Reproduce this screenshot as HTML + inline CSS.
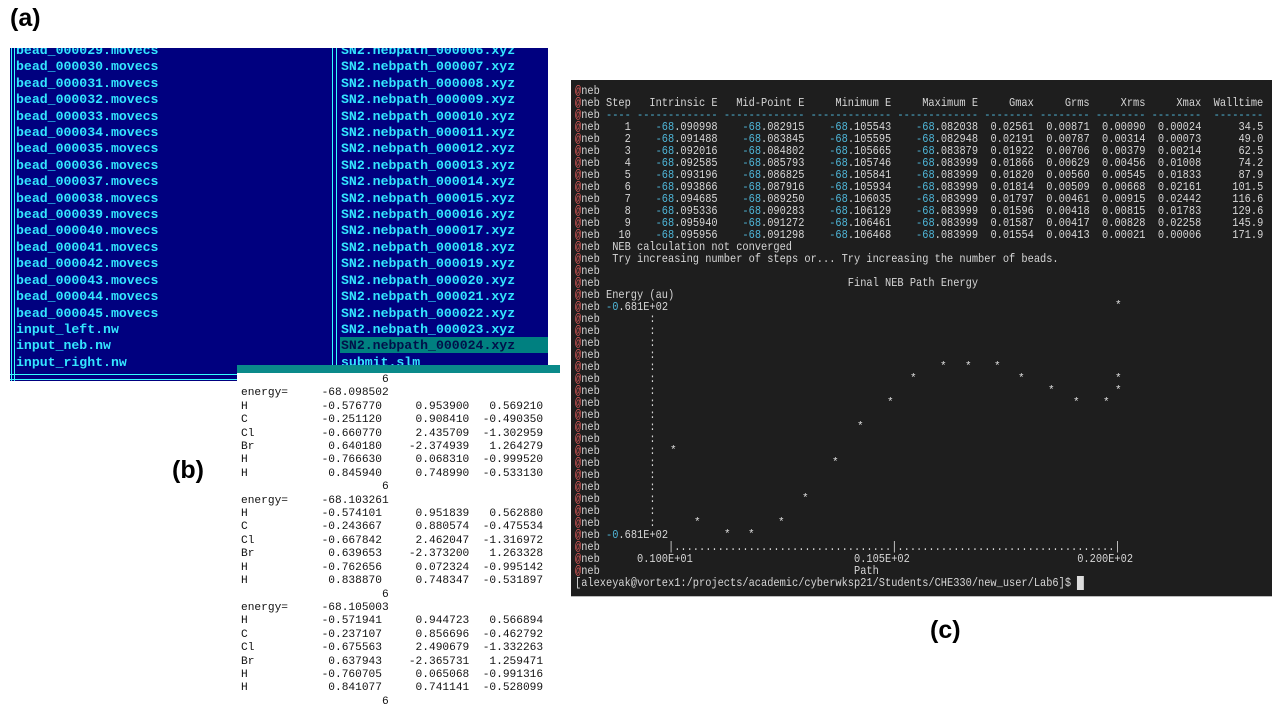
<!DOCTYPE html>
<html><head><meta charset="utf-8"><style>
*{margin:0;padding:0}
body{width:1280px;height:720px;background:#fff;position:relative;overflow:hidden;font-family:"Liberation Sans",sans-serif}
.lab{position:absolute;font-weight:bold;font-size:25px;color:#000}
#a{position:absolute;left:10px;top:48px;width:538px;height:333px;background:#00007f;overflow:hidden}
.vl{position:absolute;top:0;bottom:0;width:1px;background:#3ff}
.hl{position:absolute;left:0;right:0;height:1px;background:#3ff}
.col{position:absolute;font-family:"Liberation Mono",monospace;font-weight:bold;font-size:13.2px;line-height:16.4px;color:#33e6ff;white-space:pre}
#hi{position:absolute;left:330px;top:289px;width:208px;height:16px;background:#008080}
#b{position:absolute;left:237px;top:365px;width:323px;height:355px;background:#fff;overflow:hidden}
#b pre{position:absolute;left:4px;top:9px;font-family:"Liberation Mono",monospace;font-size:11.2px;line-height:13.4px;color:#111}
#c{position:absolute;left:571px;top:80px;width:701px;height:516px;background:#1e1e1e;border-bottom:1px solid #bbb;overflow:hidden}
#c pre{position:absolute;left:4px;top:5px;font-family:"Liberation Mono",monospace;font-size:12px;line-height:12px;color:#d6d6d6;transform:scaleX(0.861);transform-origin:0 0}
#c i{font-style:normal;color:#e05a5a}
#c b{font-weight:normal;color:#4fb6d8}
.s{position:absolute;font-family:"Liberation Mono",monospace;font-size:11px;line-height:12px;color:#e0e0e0}
</style></head><body>
<div class="lab" style="left:10px;top:4px">(a)</div>
<div class="lab" style="left:172px;top:456px">(b)</div>
<div class="lab" style="left:930px;top:616px">(c)</div>

<div id="a">
<div class="vl" style="left:1px"></div><div class="vl" style="left:4px"></div>
<div class="vl" style="left:322px"></div><div class="vl" style="left:326px"></div>
<div class="hl" style="top:326px"></div><div class="hl" style="top:331px"></div>
<div id="hi"></div>
<div class="col" style="left:6px;top:-5px">bead_000029.movecs
bead_000030.movecs
bead_000031.movecs
bead_000032.movecs
bead_000033.movecs
bead_000034.movecs
bead_000035.movecs
bead_000036.movecs
bead_000037.movecs
bead_000038.movecs
bead_000039.movecs
bead_000040.movecs
bead_000041.movecs
bead_000042.movecs
bead_000043.movecs
bead_000044.movecs
bead_000045.movecs
input_left.nw
input_neb.nw
input_right.nw</div>
<div class="col" style="left:331px;top:-5px">SN2.nebpath_000006.xyz
SN2.nebpath_000007.xyz
SN2.nebpath_000008.xyz
SN2.nebpath_000009.xyz
SN2.nebpath_000010.xyz
SN2.nebpath_000011.xyz
SN2.nebpath_000012.xyz
SN2.nebpath_000013.xyz
SN2.nebpath_000014.xyz
SN2.nebpath_000015.xyz
SN2.nebpath_000016.xyz
SN2.nebpath_000017.xyz
SN2.nebpath_000018.xyz
SN2.nebpath_000019.xyz
SN2.nebpath_000020.xyz
SN2.nebpath_000021.xyz
SN2.nebpath_000022.xyz
SN2.nebpath_000023.xyz
<span style="color:#00104a">SN2.nebpath_000024.xyz</span>
submit.slm</div>
</div>

<div id="b">
<div style="position:absolute;left:0;top:0;width:323px;height:8px;background:#0a8a8a"></div>
<pre>                     6
energy=     -68.098502
H           -0.576770     0.953900   0.569210
C           -0.251120     0.908410  -0.490350
Cl          -0.660770     2.435709  -1.302959
Br           0.640180    -2.374939   1.264279
H           -0.766630     0.068310  -0.999520
H            0.845940     0.748990  -0.533130
                     6
energy=     -68.103261
H           -0.574101     0.951839   0.562880
C           -0.243667     0.880574  -0.475534
Cl          -0.667842     2.462047  -1.316972
Br           0.639653    -2.373200   1.263328
H           -0.762656     0.072324  -0.995142
H            0.838870     0.748347  -0.531897
                     6
energy=     -68.105003
H           -0.571941     0.944723   0.566894
C           -0.237107     0.856696  -0.462792
Cl          -0.675563     2.490679  -1.332263
Br           0.637943    -2.365731   1.259471
H           -0.760705     0.065068  -0.991316
H            0.841077     0.741141  -0.528099
                     6</pre>
</div>

<div id="c">
<pre><i>@</i>neb
<i>@</i>neb Step   Intrinsic E   Mid-Point E     Minimum E     Maximum E     Gmax     Grms     Xrms     Xmax  Walltime
<i>@</i>neb <b>---- ------------- ------------- ------------- ------------- -------- -------- -------- --------  --------</b>
<i>@</i>neb    1    <b>-68</b>.090998    <b>-68</b>.082915    <b>-68</b>.105543    <b>-68</b>.082038  0.02561  0.00871  0.00090  0.00024      34.5
<i>@</i>neb    2    <b>-68</b>.091488    <b>-68</b>.083845    <b>-68</b>.105595    <b>-68</b>.082948  0.02191  0.00787  0.00314  0.00073      49.0
<i>@</i>neb    3    <b>-68</b>.092016    <b>-68</b>.084802    <b>-68</b>.105665    <b>-68</b>.083879  0.01922  0.00706  0.00379  0.00214      62.5
<i>@</i>neb    4    <b>-68</b>.092585    <b>-68</b>.085793    <b>-68</b>.105746    <b>-68</b>.083999  0.01866  0.00629  0.00456  0.01008      74.2
<i>@</i>neb    5    <b>-68</b>.093196    <b>-68</b>.086825    <b>-68</b>.105841    <b>-68</b>.083999  0.01820  0.00560  0.00545  0.01833      87.9
<i>@</i>neb    6    <b>-68</b>.093866    <b>-68</b>.087916    <b>-68</b>.105934    <b>-68</b>.083999  0.01814  0.00509  0.00668  0.02161     101.5
<i>@</i>neb    7    <b>-68</b>.094685    <b>-68</b>.089250    <b>-68</b>.106035    <b>-68</b>.083999  0.01797  0.00461  0.00915  0.02442     116.6
<i>@</i>neb    8    <b>-68</b>.095336    <b>-68</b>.090283    <b>-68</b>.106129    <b>-68</b>.083999  0.01596  0.00418  0.00815  0.01783     129.6
<i>@</i>neb    9    <b>-68</b>.095940    <b>-68</b>.091272    <b>-68</b>.106461    <b>-68</b>.083999  0.01587  0.00417  0.00828  0.02258     145.9
<i>@</i>neb   10    <b>-68</b>.095956    <b>-68</b>.091298    <b>-68</b>.106468    <b>-68</b>.083999  0.01554  0.00413  0.00021  0.00006     171.9
<i>@</i>neb  NEB calculation not converged
<i>@</i>neb  Try increasing number of steps or... Try increasing the number of beads.
<i>@</i>neb
<i>@</i>neb                                        Final NEB Path Energy
<i>@</i>neb Energy (au)
<i>@</i>neb <b>-0</b>.681E+02
<i>@</i>neb        :
<i>@</i>neb        :
<i>@</i>neb        :
<i>@</i>neb        :
<i>@</i>neb        :
<i>@</i>neb        :
<i>@</i>neb        :
<i>@</i>neb        :
<i>@</i>neb        :
<i>@</i>neb        :
<i>@</i>neb        :
<i>@</i>neb        :
<i>@</i>neb        :
<i>@</i>neb        :
<i>@</i>neb        :
<i>@</i>neb        :
<i>@</i>neb        :
<i>@</i>neb        :
<i>@</i>neb <b>-0</b>.681E+02
<i>@</i>neb           |...................................|...................................|
<i>@</i>neb      0.100E+01                          0.105E+02                           0.200E+02
<i>@</i>neb                                         Path
[alexeyak@vortex1:/projects/academic/cyberwksp21/Students/CHE330/new_user/Lab6]$ <span style="background:#ddd">&nbsp;</span></pre>
</div>

<div class="s" style="left:1115px;top:300px">*</div>
<div class="s" style="left:940px;top:361px">*</div>
<div class="s" style="left:965px;top:361px">*</div>
<div class="s" style="left:994px;top:361px">*</div>
<div class="s" style="left:910px;top:373px">*</div>
<div class="s" style="left:1018px;top:373px">*</div>
<div class="s" style="left:1115px;top:373px">*</div>
<div class="s" style="left:1048px;top:385px">*</div>
<div class="s" style="left:1115px;top:385px">*</div>
<div class="s" style="left:887px;top:397px">*</div>
<div class="s" style="left:1073px;top:397px">*</div>
<div class="s" style="left:1103px;top:397px">*</div>
<div class="s" style="left:857px;top:421px">*</div>
<div class="s" style="left:670px;top:445px">*</div>
<div class="s" style="left:832px;top:457px">*</div>
<div class="s" style="left:802px;top:493px">*</div>
<div class="s" style="left:694px;top:517px">*</div>
<div class="s" style="left:778px;top:517px">*</div>
<div class="s" style="left:724px;top:529px">*</div>
<div class="s" style="left:748px;top:529px">*</div>
</body></html>
